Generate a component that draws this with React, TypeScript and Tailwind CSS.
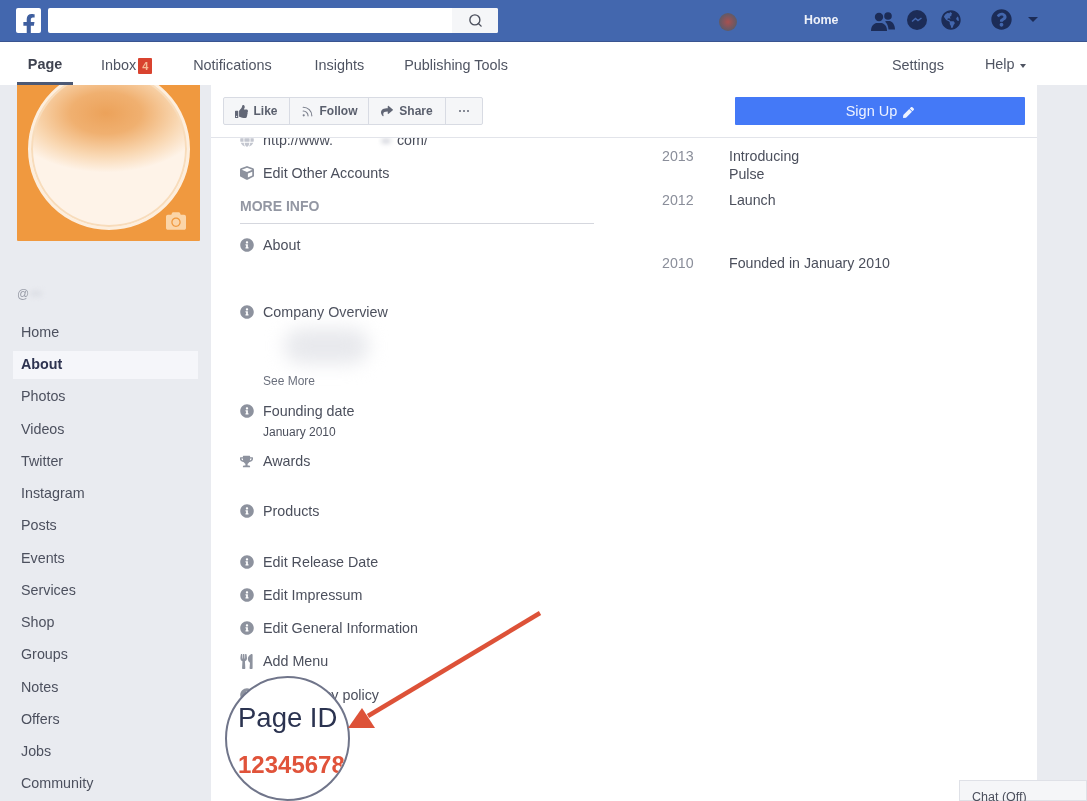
import type { ReactNode } from 'react';
import { Search, Rss } from 'lucide-react';
import { FaFacebookF, FaThumbsUp, FaShare, FaPen, FaQuestionCircle, FaGlobeAmericas, FaCamera, FaTrophy, FaCube, FaGlobe, FaInfoCircle, FaUtensils } from 'react-icons/fa';

const pageNav = ['Home', 'About', 'Photos', 'Videos', 'Twitter', 'Instagram', 'Posts', 'Events', 'Services', 'Shop', 'Groups', 'Notes', 'Offers', 'Jobs', 'Community'];

function InfoRow({ icon, className, children }: { icon: ReactNode; className?: string; children: ReactNode }) {
  return (
    <div className={`flex items-center h-5 text-[14.3px] text-[#4b4f5c] ${className ?? ''}`}>
      <span className="w-[23px] shrink-0 text-[#8d929e]">{icon}</span>
      <span className="flex items-center pt-[2px]">{children}</span>
    </div>
  );
}

const info = <FaInfoCircle className="w-[14px] h-[14px]" />;

function FriendsIcon() {
  return (
    <svg className="mt-[12px] ml-[33px] w-[24px] h-[19px] text-[#1c2c57]" viewBox="0 0 24 19" fill="currentColor">
      <circle cx="8" cy="5" r="4.2" />
      <path d="M0 19c0-5 2.5-7 5-8h6c2.500 1 5 3 5 8z" />
      <circle cx="17" cy="4" r="3.800" />
      <path d="M14 9.500c1-.5 2-.5 3-.5h2c2.500 1 5 3.500 5 8.500h-6.500c-.3-3.500-1.500-6.500-3.500-8z" />
    </svg>
  );
}

function MessengerIcon() {
  return (
    <svg className="mt-[10px] ml-[12px] w-[20px] h-[20px]" viewBox="0 0 20 20">
      <circle cx="10" cy="10" r="10" fill="#1c2c57" />
      <path d="M5 11.500l3.500-3 2.500 2 3.500-2.500" fill="none" stroke="#4367ae" strokeWidth="1.500" />
    </svg>
  );
}

export default function App() {
  return (
    <div className="relative w-[1087px] h-[801px] overflow-hidden bg-[#e9ebf0] font-['Liberation_Sans',Arial,sans-serif] blur-[0.4px]">
      {/* top bar */}
      <div className="flex items-start h-[42px] bg-[#4367ae] border-b border-[#3a5590]">
        <div className="mt-[8px] ml-[16px] w-[25px] h-[25px] bg-white rounded-[2px] flex items-end justify-center overflow-hidden">
          <FaFacebookF className="w-[20px] h-[21px] text-[#3f5f9f] translate-y-[2px]" />
        </div>
        <div className="mt-[8px] ml-[7px] w-[450px] h-[25px] bg-white rounded-[2px] flex justify-end">
          <div className="w-[46px] bg-[#f5f6f8] rounded-r-[2px] flex items-center justify-center">
            <Search className="w-[15px] h-[15px] text-[#4b4f5c]" strokeWidth={2.2} />
          </div>
        </div>
        <div className="mt-[13px] ml-[221px] w-[18px] h-[18px] rounded-full bg-[radial-gradient(circle,#a8504f_0%,#5f5a68_70%,#4367ae_100%)]" />
        <span className="mt-[12px] ml-[67px] text-[12.4px] leading-[16px] font-bold text-[#eef1f8]">Home</span>
        <FriendsIcon />
        <MessengerIcon />
        <FaGlobeAmericas className="mt-[10px] ml-[14px] w-[20px] h-[20px] text-[#1c2c57]" />
        <FaQuestionCircle className="mt-[9px] ml-[30px] w-[21px] h-[21px] text-[#1c2c57]" />
        <span className="mt-[17px] ml-[16px] w-0 h-0 border-x-[5px] border-x-transparent border-t-[5px] border-t-[#1c2c57]" />
      </div>

      {/* page tabs */}
      <div className="relative flex items-center h-[43px] pt-[5px] bg-white text-[14.4px] text-[#4f5462]">
        <div className="ml-[17px] w-[56px] h-full flex items-center justify-center font-bold text-[#3f4350] border-b-[3px] border-[#4c5975] pt-[1px]">Page</div>
        <span className="ml-[28px]">Inbox</span>
        <span className="ml-[2px] mb-[1px] w-[14px] h-[16px] bg-[#d9432f] rounded-[1px] text-[11px] leading-[16px] text-center font-bold text-[#f5bd97]">4</span>
        <span className="ml-[41px]">Notifications</span>
        <span className="ml-[43px]">Insights</span>
        <span className="ml-[40px]">Publishing Tools</span>
        <span className="ml-[384px]">Settings</span>
        <span className="ml-[41px] mb-[2px]">Help</span>
        <span className="ml-[5px] w-0 h-0 border-x-[3px] border-x-transparent border-t-[4px] border-t-[#4f5462]" />
      </div>

      <div className="flex h-[716px]">
        {/* left column */}
        <aside className="w-[211px] shrink-0">
          <div className="relative ml-[17px] w-[183px] h-[156px] bg-[#f0993f] rounded-b-[1px] overflow-hidden">
            <div className="absolute left-[11px] -top-[17px] w-[162px] h-[162px] rounded-full border-[3px] border-[#fdeedd] shadow-[inset_0_0_0_2px_#f8dcbb] bg-[radial-gradient(ellipse_65%_38%_at_48%_27%,#eca25a_0%,#f0b070_35%,#f9d8b3_72%,#fef3e8_100%)]" />
            <FaCamera className="absolute right-[13px] bottom-[10px] w-[22px] h-[20px] text-[#fbd5a8]" />
          </div>
          <div className="mt-[45px] ml-[17px] h-[15px] flex items-center text-[12px] text-[#9a9ea9]">
            @<span className="ml-[1px] w-[12px] h-[7px] rounded-full bg-[#dfe1e7] blur-[2px]" />
          </div>
          <nav className="mt-[15.5px] ml-[13px] w-[185px] text-[14.3px] text-[#4c505e]">
            {pageNav.map((item) => (
              <div key={item} className="h-[32.25px] flex items-center">
                <div className={`w-full h-[28px] pl-[8px] flex items-center ${item === 'About' ? 'bg-[#f5f6fa] font-bold text-[#2d3350]' : ''}`}>
                  {item}
                </div>
              </div>
            ))}
          </nav>
        </aside>

        {/* main panel */}
        <main className="w-[826px] shrink-0 bg-white">
          <div className="flex items-center justify-between h-[53px] pl-[12px] pr-[12px] border-b border-[#e2e4ea]">
            <div className="flex h-[28px] border border-[#d8dbe3] rounded-[2px] bg-[#f5f6f8] text-[12px] font-bold text-[#5a5f6d]">
              <div className="w-[66px] flex items-center justify-center gap-[5px] border-r border-[#d8dbe3]">
                <FaThumbsUp className="w-[13px] h-[13px] text-[#626776]" /> Like
              </div>
              <div className="w-[79px] flex items-center justify-center gap-[6px] border-r border-[#d8dbe3]">
                <Rss className="w-[13px] h-[13px] text-[#7a7f8c]" /> Follow
              </div>
              <div className="w-[77px] flex items-center justify-center gap-[6px] border-r border-[#d8dbe3]">
                <FaShare className="w-[12px] h-[12px] text-[#626776]" /> Share
              </div>
              <div className="w-[36px] flex items-center justify-center gap-[2px]">
                <span className="w-[2px] h-[2px] rounded-full bg-[#626776]" />
                <span className="w-[2px] h-[2px] rounded-full bg-[#626776]" />
                <span className="w-[2px] h-[2px] rounded-full bg-[#626776]" />
              </div>
            </div>
            <div className="w-[290px] h-[28px] pt-[2px] bg-[#4479f7] rounded-[1px] flex items-center justify-center gap-[6px] text-[14.5px] text-[#eef3ff]">
              Sign Up <FaPen className="w-[11px] h-[11px]" />
            </div>
          </div>

          <div className="flex h-[662px] overflow-hidden">
            <div className="ml-[29px] w-[354px] shrink-0 -mt-[8px]">
              <InfoRow icon={<FaGlobe className="w-[14px] h-[14px] text-[#c3c6cf]" />}>
                http://www.<span className="w-[64px] flex justify-end pr-[6px]"><span className="w-[10px] h-[6px] rounded-full bg-[#dcdde3] blur-[2px]" /></span>com/
              </InfoRow>
              <InfoRow className="mt-[13px]" icon={<FaCube className="w-[14px] h-[14px]" />}>Edit Other Accounts</InfoRow>
              <div className="mt-[13px] h-5 flex items-center text-[14px] font-bold text-[#9397a3]">MORE INFO</div>
              <div className="mt-[7px] h-px bg-[#d5d7de]" />
              <InfoRow className="mt-[11px]" icon={info}>About</InfoRow>
              <InfoRow className="mt-[47px]" icon={info}>Company Overview</InfoRow>
              <div className="h-[51px] pt-[6px] pl-[44px]">
                <div className="w-[85px] h-[36px] rounded-full bg-[#e8e9ed] blur-[9px]" />
              </div>
              <div className="pl-[23px] h-4 flex items-center text-[12px] text-[#6a6f7c]">See More</div>
              <InfoRow className="mt-[12px]" icon={info}>Founding date</InfoRow>
              <div className="mt-[3px] pl-[23px] h-4 flex items-center text-[12px] text-[#4b4f5c]">January 2010</div>
              <InfoRow className="mt-[11px]" icon={<FaTrophy className="w-[13px] h-[13px]" />}>Awards</InfoRow>
              <InfoRow className="mt-[30px]" icon={info}>Products</InfoRow>
              <InfoRow className="mt-[31px]" icon={info}>Edit Release Date</InfoRow>
              <InfoRow className="mt-[13px]" icon={info}>Edit Impressum</InfoRow>
              <InfoRow className="mt-[13px]" icon={info}>Edit General Information</InfoRow>
              <InfoRow className="mt-[13px]" icon={<FaUtensils className="w-[13px] h-[15px]" />}>Add Menu</InfoRow>
              <InfoRow className="mt-[14px]" icon={info}>Edit Privacy policy</InfoRow>
            </div>

            <div className="ml-[68px] pt-[9px] text-[14.2px] leading-[18px]">
              <div className="flex">
                <span className="w-[67px] text-[#8a8e9a]">2013</span>
                <span className="text-[#4b4f5c]">Introducing<br />Pulse</span>
              </div>
              <div className="flex mt-[8px]">
                <span className="w-[67px] text-[#8a8e9a]">2012</span>
                <span className="text-[#4b4f5c]">Launch</span>
              </div>
              <div className="flex mt-[45px]">
                <span className="w-[67px] text-[#8a8e9a]">2010</span>
                <span className="text-[#4b4f5c]">Founded in January 2010</span>
              </div>
            </div>
          </div>
        </main>
      </div>

      {/* magnifier over the Page ID row */}
      <div className="absolute left-[225px] top-[676px] w-[125px] h-[125px] rounded-full border-2 border-[#70758a] bg-white overflow-hidden pl-[11px] pt-[24px] whitespace-nowrap">
        <div className="text-[27.5px] leading-[32px] text-[#2b3350]">Page ID</div>
        <div className="mt-[17px] text-[24px] leading-[28px] font-bold text-[#e0533a]">12345678</div>
      </div>

      <svg className="absolute left-0 top-0 pointer-events-none" width="1087" height="801" viewBox="0 0 1087 801">
        <line x1="540" y1="613" x2="368" y2="716" stroke="#dd5238" strokeWidth="4.5" />
        <polygon points="348,728 362,708 375,728" fill="#dd5238" />
      </svg>

      <div className="absolute left-[959px] top-[780px] w-[128px] h-[21px] bg-[#f5f6f8] border border-[#dfe1e7] pl-[12px] pt-[7px] text-[12.5px] text-[#4b4f5c]">
        Chat (Off)
      </div>
    </div>
  );
}
